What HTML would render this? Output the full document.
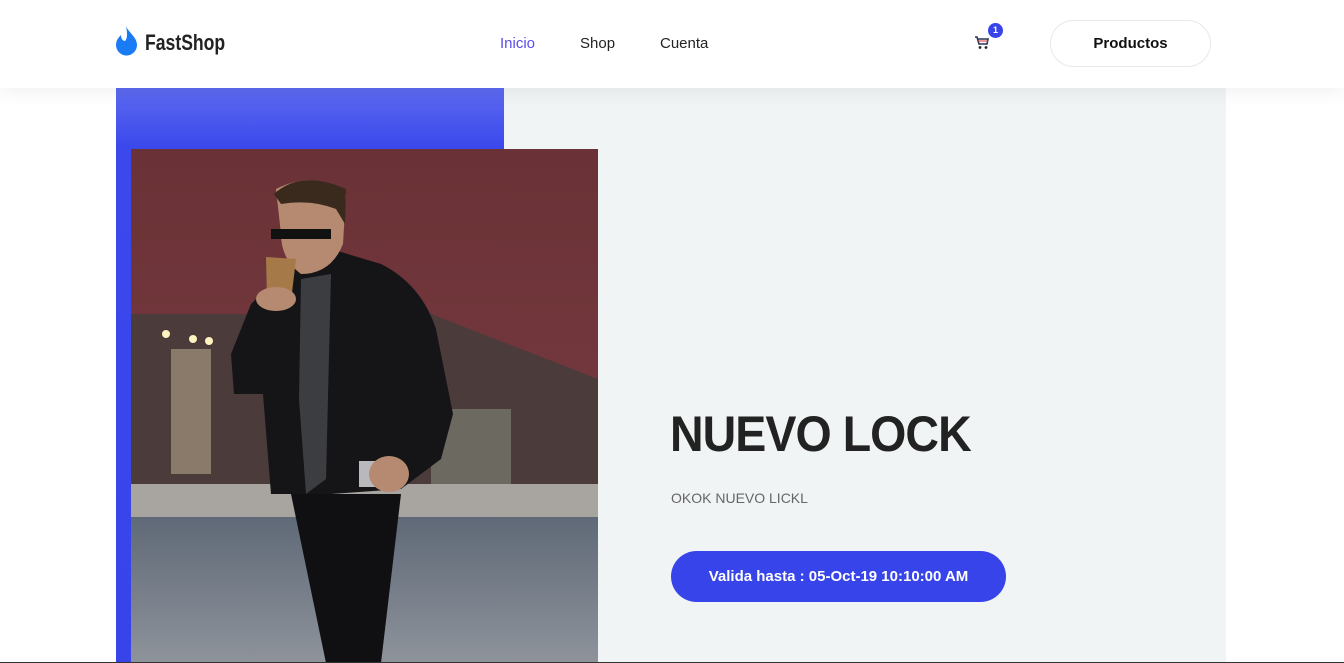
<!DOCTYPE html>
<html><head><meta charset="utf-8"><style>
*{margin:0;padding:0;box-sizing:border-box}
body{width:1344px;height:663px;overflow:hidden;background:#fff;font-family:"Liberation Sans",Roboto,sans-serif;position:relative}
.hdr{position:absolute;left:0;top:0;width:1344px;height:88px;background:#fff;box-shadow:0 4px 18px rgba(0,0,0,.06);z-index:5}
.logo{position:absolute;left:115px;top:24px;display:flex;align-items:center}
.logo span{font-weight:bold;font-size:22px;color:#222;margin-left:7px;display:inline-block;transform:scaleX(.8);transform-origin:left center;margin-top:6px}
.nav{position:absolute;top:35px;font-size:15px;color:#222}
.btn{position:absolute;left:1050px;top:20px;width:161px;height:47px;border:1px solid #e8e8e8;border-radius:24px;text-align:center;line-height:45px;font-size:15px;font-weight:bold;color:#111}
.panel{position:absolute;left:504px;top:88px;width:722px;height:575px;background:#f0f4f4}
.blue{position:absolute;left:116px;top:88px;width:388px;height:575px;background:linear-gradient(#5d6af0,#3a48ec 60px,#3644ea)}
.photo{position:absolute;left:131px;top:149px;width:467px;height:514px}
h1{position:absolute;left:670px;top:405px;font-size:50px;font-weight:bold;color:#222;letter-spacing:-1px;transform:scaleX(.93);transform-origin:left}
.sub{position:absolute;left:671px;top:490px;font-size:14px;color:#666}
.cta{position:absolute;left:671px;top:551px;width:335px;height:51px;border-radius:26px;background:#3644ea;color:#fff;font-weight:bold;font-size:15px;text-align:center;line-height:51px}
.line{position:absolute;left:0;top:662px;width:1344px;height:1px;background:#333}
</style></head><body>
<div class="hdr">
 <div class="logo"><svg width="23" height="31" viewBox="0 0 23 31"><path d="M11 1C13 7 22 12 22 20A10.5 10.5 0 0 1 1 20C1 15 4 12 6 10C6 14 8 16 10 16C13 13 12 6 11 1Z" fill="#1a7cf5"/></svg><span>FastShop</span></div>
 <div class="nav" style="left:500px;color:#5b4de8">Inicio</div>
 <div class="nav" style="left:580px">Shop</div>
 <div class="nav" style="left:660px">Cuenta</div>
 <svg style="position:absolute;left:974px;top:35px" width="16" height="15" viewBox="0 0 16 15"><path d="M1 2H3L5 9H13L14 4H4" fill="none" stroke="#2a3550" stroke-width="1.6"/><path d="M4 6H14" stroke="#d33" stroke-width="1"/><circle cx="6" cy="12.5" r="1.4" fill="#222"/><circle cx="12" cy="12.5" r="1.4" fill="#222"/></svg>
 <div style="position:absolute;left:988px;top:23px;width:15px;height:15px;border-radius:50%;background:#3644ea;color:#fff;font-size:9px;font-weight:bold;text-align:center;line-height:15px">1</div>
 <div class="btn">Productos</div>
</div>
<div class="panel"></div>
<div class="blue"></div>
<svg class="photo" viewBox="0 0 467 514" preserveAspectRatio="none">
 <defs><linearGradient id="b" x1="0" y1="0" x2="0" y2="1"><stop offset="0" stop-color="#6a3236"/><stop offset="1" stop-color="#7c3e45"/></linearGradient>
 <linearGradient id="r" x1="0" y1="0" x2="0" y2="1"><stop offset="0" stop-color="#5f6977"/><stop offset="1" stop-color="#8e939b"/></linearGradient></defs>
 <rect width="467" height="514" fill="url(#b)"/>
 <path d="M0 165 L300 165 L467 230 L467 340 L0 340 Z" fill="#4b3b3a"/>
 <rect x="40" y="200" width="40" height="125" fill="#8a7a6a"/>
 <rect x="300" y="260" width="80" height="90" fill="#6c6a60"/>
 <rect x="0" y="335" width="467" height="35" fill="#a8a4a0"/>
 <rect x="0" y="368" width="467" height="146" fill="url(#r)"/>
 <circle cx="35" cy="185" r="4" fill="#fff3c0"/><circle cx="62" cy="190" r="4" fill="#fff3c0"/><circle cx="78" cy="192" r="4" fill="#fff3c0"/>
 <path d="M120 155 Q160 115 200 100 L250 115 Q290 135 305 180 L322 265 L310 310 L270 340 L200 345 L140 345 L132 245 L103 245 L100 205 Z" fill="#151518"/>
 <path d="M170 130 L200 125 L195 330 L175 345 L168 250 Z" fill="#3b3d40"/>
 <path d="M160 345 L270 345 L250 514 L195 514 Z" fill="#101012"/>
 <path d="M145 40 Q185 20 215 45 L212 95 Q200 125 170 125 Q150 110 150 85 Z" fill="#b58a70"/>
 <path d="M143 45 Q170 20 215 40 L214 75 L205 60 Q180 50 150 55 Z" fill="#3a2a1e"/>
 <rect x="140" y="80" width="60" height="10" fill="#111"/>
 <path d="M135 108 L165 110 L160 152 L136 150 Z" fill="#a67a48"/>
 <ellipse cx="145" cy="150" rx="20" ry="12" fill="#b58a70"/>
 <rect x="228" y="312" width="22" height="26" fill="#b9b9bd"/>
 <ellipse cx="258" cy="325" rx="20" ry="18" fill="#b58a70"/>
</svg>
<h1>NUEVO LOCK</h1>
<div class="sub">OKOK NUEVO LICKL</div>
<div class="cta">Valida hasta : 05-Oct-19 10:10:00 AM</div>
<div class="line"></div>
</body></html>
